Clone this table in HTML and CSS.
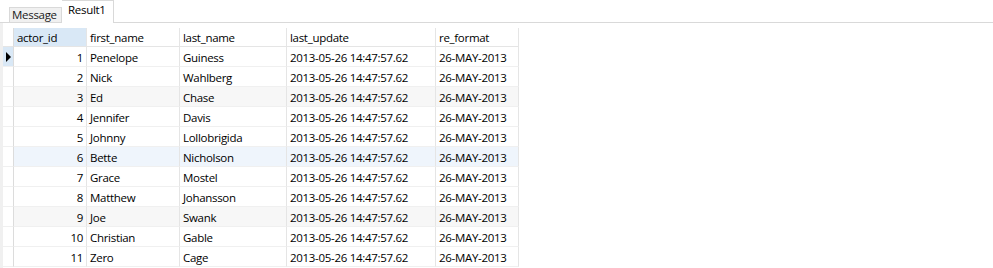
FILE: index.html
```html
<!DOCTYPE html>
<html>
<head>
<meta charset="utf-8">
<link rel="stylesheet" href="styles.css">
</head>
<body>
<div class="tabs">
  <div class="tab tab-inactive">Message</div>
  <div class="tab tab-active">Result1</div>
</div>
<div class="grid-pane">
  <table class="grid">
    <thead>
      <tr>
        <th class="gutter"></th>
        <th class="c-id selected">actor_id</th>
        <th class="c-first">first_name</th>
        <th class="c-last">last_name</th>
        <th class="c-upd">last_update</th>
        <th class="c-fmt">re_format</th>
      </tr>
    </thead>
    <tbody>
      <tr class="current"><td class="gutter"><span class="arrow"></span></td><td class="num">1</td><td>Penelope</td><td>Guiness</td><td>2013-05-26 14:47:57.62</td><td>26-MAY-2013</td></tr>
      <tr><td class="gutter"></td><td class="num">2</td><td>Nick</td><td>Wahlberg</td><td>2013-05-26 14:47:57.62</td><td>26-MAY-2013</td></tr>
      <tr class="alt"><td class="gutter"></td><td class="num">3</td><td>Ed</td><td>Chase</td><td>2013-05-26 14:47:57.62</td><td>26-MAY-2013</td></tr>
      <tr><td class="gutter"></td><td class="num">4</td><td>Jennifer</td><td>Davis</td><td>2013-05-26 14:47:57.62</td><td>26-MAY-2013</td></tr>
      <tr><td class="gutter"></td><td class="num">5</td><td>Johnny</td><td>Lollobrigida</td><td>2013-05-26 14:47:57.62</td><td>26-MAY-2013</td></tr>
      <tr class="hover"><td class="gutter"></td><td class="num">6</td><td>Bette</td><td>Nicholson</td><td>2013-05-26 14:47:57.62</td><td>26-MAY-2013</td></tr>
      <tr><td class="gutter"></td><td class="num">7</td><td>Grace</td><td>Mostel</td><td>2013-05-26 14:47:57.62</td><td>26-MAY-2013</td></tr>
      <tr><td class="gutter"></td><td class="num">8</td><td>Matthew</td><td>Johansson</td><td>2013-05-26 14:47:57.62</td><td>26-MAY-2013</td></tr>
      <tr class="alt"><td class="gutter"></td><td class="num">9</td><td>Joe</td><td>Swank</td><td>2013-05-26 14:47:57.62</td><td>26-MAY-2013</td></tr>
      <tr><td class="gutter"></td><td class="num">10</td><td>Christian</td><td>Gable</td><td>2013-05-26 14:47:57.62</td><td>26-MAY-2013</td></tr>
      <tr><td class="gutter"></td><td class="num">11</td><td>Zero</td><td>Cage</td><td>2013-05-26 14:47:57.62</td><td>26-MAY-2013</td></tr>
    </tbody>
  </table>
</div>
</body>
</html>
```

FILE: styles.css
```css
html, body {
  margin: 0;
  padding: 0;
  background: #ffffff;
}
body {
  font-family: "Open Sans", "Noto Sans", sans-serif;
  font-size: 11.5px;
  letter-spacing: -0.3px;
  color: #000000;
  width: 993px;
  height: 268px;
  overflow: hidden;
}
.tabs {
  display: flex;
  align-items: flex-end;
  height: 22px;
  border-bottom: 1px solid #d9d9d9;
  padding-left: 9px;
}
.tab {
  box-sizing: border-box;
  white-space: nowrap;
}
.tab-inactive {
  height: 15px;
  width: 53px;
  background: #f0f0f0;
  border: 1px solid #d9d9d9;
  border-bottom: none;
  padding-left: 2px;
  line-height: 14px;
  color: #1a1a1a;
}
.tab-active {
  height: 23px;
  margin-bottom: -1px;
  width: 52px;
  background: #ffffff;
  border: 1px solid #d9d9d9;
  border-bottom: none;
  border-left: none;
  padding: 1px 0 0 6px;
  line-height: 16px;
}
.grid-pane {
  border-left: 3px solid #f0f0f0;
  padding-top: 5px;
  height: 245px;
}
.grid {
  border-collapse: separate;
  border-spacing: 0;
  table-layout: fixed;
  width: 516px;
}
.grid th, .grid td {
  box-sizing: border-box;
  padding: 2px 0 0 3px;
  white-space: nowrap;
  overflow: hidden;
  border-right: 1px solid #e5e5e5;
  border-bottom: 1px solid #f0f0f0;
  text-align: left;
  font-weight: normal;
}
.grid th {
  height: 19px;
  border-bottom: 1px solid #e5e5e5;
  line-height: 16px;
}
.grid td {
  height: 20px;
  line-height: 17px;
}
.grid .gutter {
  width: 11px;
  padding: 0;
  border-right: 1px solid #dcdcdc;
}
.grid td.gutter {
  border-bottom: 1px solid #f0f0f0;
}
.grid .c-id { width: 73px; }
.grid .c-first { width: 93px; }
.grid .c-last { width: 107px; }
.grid .c-upd { width: 149px; }
.grid .c-fmt { width: 83px; }
.grid th.selected {
  background: #d9e8f6;
}
.grid td.num {
  text-align: right;
  padding: 2px 3px 0 0;
}
.grid tr.alt td {
  background: #f7f7f7;
}
.grid tr.alt td.gutter,
.grid tr.hover td.gutter {
  background: #ffffff;
}
.grid tr.hover td {
  background: #eff5fc;
}
.grid tr.current td.gutter {
  background: #d9e8f6;
}
.arrow {
  display: block;
  width: 0;
  height: 0;
  margin-left: 3px;
  border-top: 5px solid transparent;
  border-bottom: 5px solid transparent;
  border-left: 5px solid #000000;
}
```
